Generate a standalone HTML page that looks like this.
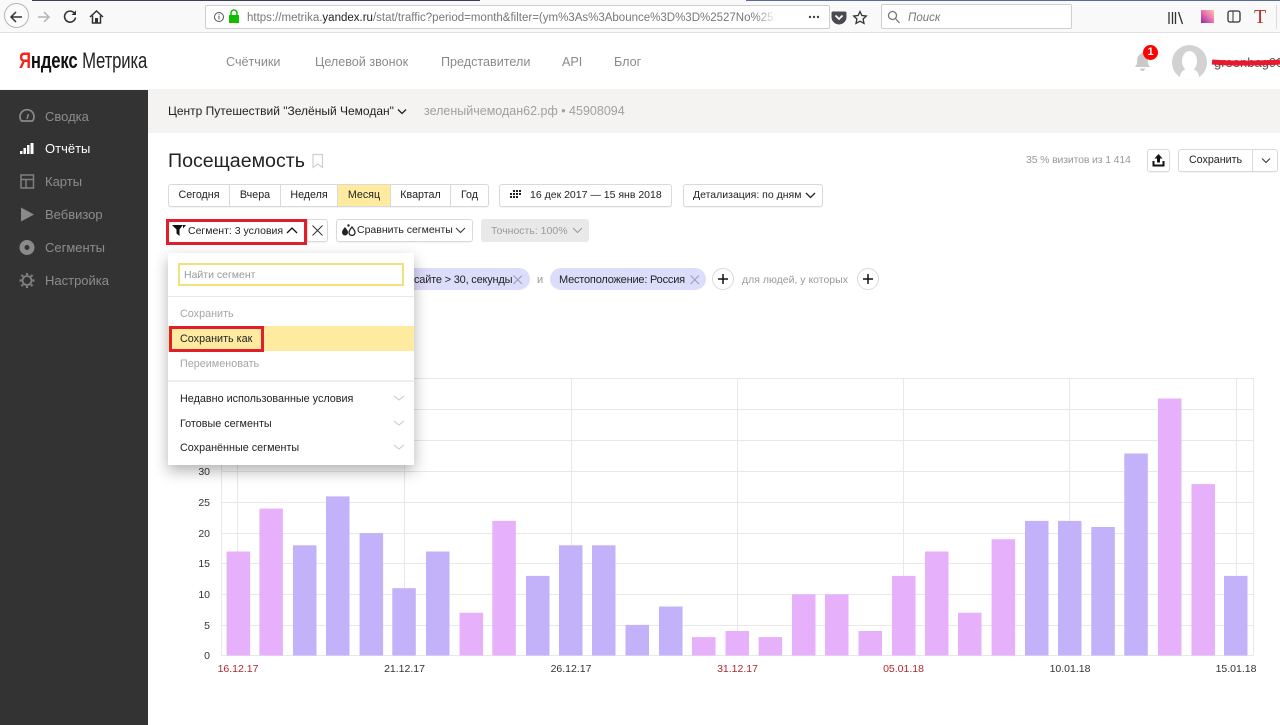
<!DOCTYPE html>
<html lang="ru"><head><meta charset="utf-8"><title>Посещаемость</title>
<style>
html,body{margin:0;padding:0;background:#fff}
body{width:1280px;height:725px;overflow:hidden;position:relative;font-family:"Liberation Sans",Arial,sans-serif;color:#222;font-size:12px}
.a,.t{position:absolute}
.t{white-space:nowrap;line-height:14px}
.btn{position:absolute;box-sizing:border-box;height:23px;background:#fff;border:1px solid #d9d9d9;border-radius:3px;line-height:21px;font-size:10.700px;white-space:nowrap;color:#222;box-shadow:0 1px 1px rgba(0,0,0,.05)}
.seg{position:absolute;top:0;bottom:0;box-sizing:border-box;text-align:center;border-right:1px solid #d9d9d9;line-height:21px}
.nav{font-size:12.600px;color:#8a8a8a}
.side{font-size:13px;color:#8d8d8d;left:45px}
.m{left:180px;font-size:10.800px;color:#222}
svg{position:absolute;overflow:visible}
</style></head><body>

<!-- browser toolbar -->
<div class="a" style="left:0;top:0;width:1280px;height:33px;background:#f9f9fa;border-bottom:1px solid #e0e0e1;box-sizing:border-box"></div>
<div class="a" style="left:32px;top:0;width:448px;height:1px;background:#3a4150"></div>
<div class="a" style="left:746px;top:0;width:534px;height:1px;background:#5a6b93"></div>
<div class="a" style="left:4px;top:3px;width:25px;height:25px;border:1px solid #b5b5b7;border-radius:50%;background:#fbfbfb;box-sizing:border-box"></div>
<svg style="left:0;top:0" width="120" height="33" fill="none">
<path d="M22 17H11M16 12l-5 5 5 5" stroke="#333" stroke-width="1.5"/>
<path d="M49 17H38M44 12l5 5-5 5" stroke="#b4b4b4" stroke-width="1.5"/>
<path d="M75.5 17.5a5.5 5.5 0 1 1-1.3-4.5" stroke="#333" stroke-width="1.6"/><path d="M76 10.5v4.5h-4.5z" fill="#333"/>
<path d="M90 17l6.5-6 6.500 6M92.500 15.500V23h8v-7.500" stroke="#333" stroke-width="1.5"/><rect x="95" y="18" width="3" height="5" fill="#333"/>
</svg>
<div class="a" style="left:168px;top:5px;width:0;height:0"></div>
<div class="a" style="left:205px;top:5px;width:625px;height:24px;box-sizing:border-box;border:1px solid #cfcfd1;border-radius:2px;background:#fff"></div>
<svg style="left:205px;top:5px" width="40" height="24" fill="none">
<circle cx="14" cy="12" r="4.500" stroke="#555" stroke-width="1"/><path d="M14 11v3.500M14 9.300v1" stroke="#555"/>
<rect x="24" y="10" width="10" height="8" fill="#12bc00"/><path d="M26 10V8a3 3 0 0 1 6 0v2" stroke="#12bc00" stroke-width="1.500"/>
</svg>
<div class="t" style="left:247px;top:11px;font-size:11.500px;color:#777;width:528px;overflow:hidden">https://metrika.<span style="color:#222">yandex.ru</span>/stat/traffic?period=month&amp;filter=(ym%3As%3Abounce%3D%3D%2527No%2527</div>
<div class="a" style="left:755px;top:8px;width:22px;height:18px;background:linear-gradient(90deg,rgba(255,255,255,0),#fff)"></div>
<svg style="left:800px;top:5px" width="75" height="24" fill="#444">
<circle cx="10" cy="12" r="1.200"/><circle cx="14" cy="12" r="1.200"/><circle cx="18" cy="12" r="1.200"/>
<path d="M33 6.500h12a1.500 1.500 0 0 1 1.500 1.500v4a7.500 7.500 0 0 1-15 0V8A1.500 1.500 0 0 1 33 6.500z" fill="#4a4a4f"/><path d="M35.500 10.500l3.500 3.500 3.500-3.500" fill="none" stroke="#fff" stroke-width="1.800"/>
<path d="M60 6.500l1.900 4 4.400.5-3.200 3 .9 4.400-4-2.200-4 2.200.9-4.400-3.200-3 4.400-.5z" fill="none" stroke="#333" stroke-width="1.300"/>
</svg>
<div class="a" style="left:881px;top:4px;width:191px;height:25px;box-sizing:border-box;border:1px solid #cfcfd1;border-radius:2px;background:#fff"></div>
<svg style="left:881px;top:5px" width="30" height="24" fill="none"><circle cx="11.500" cy="10.500" r="4" stroke="#777" stroke-width="1.300"/><path d="M14.500 13.500l4 4.500" stroke="#777" stroke-width="1.300"/></svg>
<div class="t" style="left:908px;top:11px;font-size:11.5px;font-style:italic;color:#777">Поиск</div>
<svg style="left:1170px;top:5px" width="110" height="24" fill="none">
<path d="M-1 7v12M2.500 7v12M5.500 7v12M8.500 7l4 12" stroke="#333" stroke-width="1.300"/>
<defs><linearGradient id="g" x1="1" y1="0" x2="0" y2="1"><stop offset="0" stop-color="#f9c8a8"/><stop offset=".5" stop-color="#e86fb0"/><stop offset="1" stop-color="#8b2fa8"/></linearGradient></defs>
<rect x="31" y="5" width="13" height="13" fill="url(#g)"/>
<rect x="58" y="6" width="12" height="11" rx="2" stroke="#333" stroke-width="1.300"/><path d="M63 6v11" stroke="#333"/>
</svg>
<div class="t" style="left:1254px;top:7px;font-family:'Liberation Serif',serif;font-size:20px;line-height:20px;color:#b5342a">T</div>
<div class="a" style="left:1276px;top:5px;width:1px;height:24px;background:#dcdcdc"></div>

<!-- site header -->
<div class="t" style="left:19px;top:48px;font-size:22px;line-height:26px;transform:scaleX(.76);transform-origin:0 0;letter-spacing:-.2px;width:190px"><span style="color:#f0261f;font-weight:bold">Я</span><span style="font-weight:bold;color:#111">ндекс</span> <span style="color:#222">Метрика</span></div>
<div class="t nav" style="left:226px;top:55px">Счётчики</div>
<div class="t nav" style="left:315px;top:55px">Целевой звонок</div>
<div class="t nav" style="left:441px;top:55px">Представители</div>
<div class="t nav" style="left:562px;top:55px">API</div>
<div class="t nav" style="left:614px;top:55px">Блог</div>
<svg style="left:1130px;top:45px" width="30" height="30" fill="#c9c9c9"><path d="M9 3a1.500 1.500 0 0 1 3 0c3.500 1 3.800 4 3.800 7 0 3.500 1.200 4.500 2.200 6H3c1-1.500 2.200-2.500 2.200-6 0-3 .3-6 3.800-7z" transform="translate(2 6)"/><path d="M10 23.500h5a2.500 2.500 0 0 1-5 0z"/></svg>
<div class="a" style="left:1143px;top:45px;width:15px;height:15px;border-radius:50%;background:#f00;color:#fff;font-size:11px;font-weight:bold;text-align:center;line-height:15px">1</div>
<div class="a" style="left:1172px;top:45px;width:35px;height:35px;border-radius:50%;background:#d2d2d2;overflow:hidden"><div class="a" style="left:10px;top:6px;width:15px;height:20px;border-radius:50%;background:#fff"></div><div class="a" style="left:8px;top:24px;width:19px;height:14px;border-radius:8px 8px 0 0;background:#fff"></div></div>
<div class="t" style="left:1214px;top:56px;font-size:13px;color:#555">greenbag90</div>
<svg style="left:1210px;top:55px" width="70" height="12"><path d="M2 7C20 8.500 50 8.500 70 7" stroke="#e8192c" stroke-width="5" fill="none"/></svg>

<!-- sidebar -->
<div class="a" style="left:0;top:89px;width:1280px;height:44px;background:#f4f3f1"></div>
<div class="a" style="left:0;top:90px;width:148px;height:635px;background:#333"></div>
<svg style="left:0;top:90px" width="148" height="210" fill="none">
<path d="M21.500 31.500a7 7 0 1 1 11 0z" stroke="#8a8a8a" stroke-width="1.700" transform="translate(0 -.5)"/><path d="M27 29l1.500-5" stroke="#8a8a8a" stroke-width="1.500"/>
<path d="M20 64h2.500v-3H20zM23.500 64h2.500v-6h-2.500zM27 64h2.500v-9H27zM30.500 64h3V53h-3z" fill="#fff"/>
<rect x="21" y="85" width="12.500" height="13" stroke="#808080" stroke-width="1.500"/><path d="M21 89.500h12.500M26 89.500V98" stroke="#808080" stroke-width="1.500"/>
<path d="M21 117.500l13 7-13 7z" fill="#8a8a8a"/>
<circle cx="27" cy="157.500" r="5" stroke="#8a8a8a" stroke-width="5"/>
<circle cx="27" cy="190.500" r="4.500" stroke="#808080" stroke-width="1.800"/><path d="M27 185v-2M27 198v-2M21.500 190.500h-2M34.500 190.500h-2M23 186.500l-1.500-1.500M32.500 196L31 194.500M23 194.500L21.500 196M32.500 185L31 186.500" stroke="#808080" stroke-width="2.200"/>
</svg>
<div class="t side" style="top:110px">Сводка</div>
<div class="t side" style="top:142px;color:#fff">Отчёты</div>
<div class="t side" style="top:175px">Карты</div>
<div class="t side" style="top:208px">Вебвизор</div>
<div class="t side" style="top:241px">Сегменты</div>
<div class="t side" style="top:274px">Настройка</div>

<!-- sub header -->
<div class="t" style="left:168px;top:104px;font-size:12px;color:#222">Центр Путешествий "Зелёный Чемодан"</div>
<svg style="left:396px;top:107px" width="12" height="10" fill="none"><path d="M2 2.500l4 4 4-4" stroke="#222" stroke-width="1.300"/></svg>
<div class="t" style="left:424px;top:104px;font-size:12.500px;color:#a0a0a0">зеленыйчемодан62.рф • 45908094</div>

<!-- title -->
<div class="t" style="left:168px;top:149px;font-size:19.600px;line-height:24px;color:#222">Посещаемость</div>
<svg style="left:311px;top:153px" width="14" height="16" fill="none"><path d="M2 1.500h9.500v13L6.750 11 2 14.500z" stroke="#d0d0d0" stroke-width="1.200"/></svg>
<div class="t" style="left:1026px;top:153px;font-size:10.500px;color:#999;letter-spacing:-.15px">35 % визитов из 1 414</div>
<div class="btn" style="left:1147px;top:149px;width:23px;height:23px"></div>
<svg style="left:1147px;top:149px" width="23" height="23" fill="#111"><path d="M11.500 5l4 4.500h-2.500v4h-3v-4H7.500z"/><path d="M5.500 12h2v3.500h8V12h2v5.500h-12z"/></svg>
<div class="btn" style="left:1178px;top:149px;width:100px;height:23px"><div class="seg" style="left:0;width:74px">Сохранить</div></div>
<svg style="left:1260px;top:156px" width="14" height="10" fill="none"><path d="M2 2.500l4 4 4-4" stroke="#333"/></svg>

<!-- row 1 -->
<div class="btn" style="left:168px;top:184px;width:321px">
<div class="seg" style="left:0;width:61px">Сегодня</div>
<div class="seg" style="left:61px;width:51px">Вчера</div>
<div class="seg" style="left:112px;width:57px">Неделя</div>
<div class="seg" style="left:169px;width:53px;background:#ffeba0">Месяц</div>
<div class="seg" style="left:222px;width:60px">Квартал</div>
<div class="seg" style="left:282px;width:37px;border:0">Год</div>
</div>
<div class="btn" style="left:499px;top:184px;width:173px;font-size:10.500px"><span class="a" style="left:30px;top:0">16 дек 2017 — 15 янв 2018</span></div>
<svg style="left:509px;top:189px" width="14" height="12" fill="#222"><path d="M4 1h2v2H4zM7 1h2v2H7zM10 1h2v2h-2zM1 4h2v2H1zM4 4h2v2H4zM7 4h2v2H7zM10 4h2v2h-2zM1 7h2v2H1zM4 7h2v2H4zM7 7h2v2H7z"/></svg>
<div class="btn" style="left:683px;top:184px;width:140px;font-size:10.500px"><span class="a" style="left:9px;top:0">Детализация: по дням</span></div>
<svg style="left:804px;top:191px" width="14" height="10" fill="none"><path d="M2 2l4.500 4.500L11 2" stroke="#222" stroke-width="1.300"/></svg>

<!-- row 2 -->
<div class="a" style="left:166px;top:219px;width:141px;height:26px;box-sizing:border-box;border:3px solid #e31e2b;background:#fff"></div>
<svg style="left:172px;top:224px" width="14" height="14" fill="#111"><path d="M0 1h11L7.500 5.500V12L4.500 9.500V5.500z"/><path d="M11 1h3L11 4.500z"/></svg>
<div class="t" style="left:188px;top:224px;font-size:10.500px">Сегмент: 3 условия</div>
<svg style="left:285px;top:226px" width="14" height="10" fill="none"><path d="M2 7l5-5 5 5" stroke="#111" stroke-width="1.300"/></svg>
<div class="btn" style="left:307px;top:219px;width:21px;border-radius:0 3px 3px 0"></div>
<svg style="left:311px;top:224px" width="13" height="13" fill="none"><path d="M1.500 1.500l10 10M11.500 1.500l-10 10" stroke="#333"/></svg>
<div class="btn" style="left:336px;top:219px;width:137px;font-size:10.500px"><span class="a" style="left:20px;top:0">Сравнить сегменты</span></div>
<svg style="left:341px;top:224px" width="16" height="13" fill="#222"><path d="M4 3c1.500 2 3 3.500 3 5.500a3 3 0 0 1-6 0C1 6.500 2.500 5 4 3z"/><path d="M11 3c1.500 2 3 3.500 3 5.500a3 3 0 0 1-6 0c0-2 1.500-3.500 3-5.500z" fill="none" stroke="#222" stroke-width="1.300"/><circle cx="7.500" cy="1.500" r="1.200"/></svg>
<svg style="left:454px;top:226px" width="14" height="10" fill="none"><path d="M2 2l4.500 4.500L11 2" stroke="#333"/></svg>
<div class="a" style="left:481px;top:219px;width:108px;height:23px;background:#e9e9e9;border-radius:3px"></div>
<div class="t" style="left:491px;top:224px;color:#999;font-size:10.500px">Точность: 100%</div>
<svg style="left:571px;top:226px" width="14" height="10" fill="none"><path d="M2 2l4.500 4.500L11 2" stroke="#999"/></svg>

<!-- chips -->
<div class="a" style="left:380px;top:268px;width:150px;height:22px;border-radius:11px;background:#dcdcfb"></div>
<div class="t" style="left:414px;top:273px;font-size:11px;color:#222;letter-spacing:-.2px">сайте &gt; 30, секунды</div>
<svg style="left:512px;top:274px" width="12" height="12" fill="none"><path d="M1.500 1.500l8.500 8.500M10 1.500L1.500 10" stroke="#9a9ab8"/></svg>
<div class="t" style="left:537px;top:273px;font-size:11px;color:#999">и</div>
<div class="a" style="left:550px;top:268px;width:156px;height:22px;border-radius:11px;background:#dcdcfb"></div>
<div class="t" style="left:559px;top:273px;font-size:11px;color:#222;letter-spacing:-.2px">Местоположение: Россия</div>
<svg style="left:689px;top:274px" width="12" height="12" fill="none"><path d="M1.500 1.500l8.500 8.500M10 1.500L1.500 10" stroke="#9a9ab8"/></svg>
<svg style="left:712px;top:268px" width="22" height="22" fill="none"><circle cx="11" cy="11" r="10.500" fill="#fff" stroke="#d9d9d9"/><path d="M6 11h10M11 6v10" stroke="#111" stroke-width="1.500"/></svg>
<div class="t" style="left:742px;top:273px;font-size:10.500px;color:#999">для людей, у которых</div>
<svg style="left:857px;top:268px" width="22" height="22" fill="none"><circle cx="11" cy="11" r="10.500" fill="#fff" stroke="#d9d9d9"/><path d="M6 11h10M11 6v10" stroke="#111" stroke-width="1.500"/></svg>

<!-- chart -->
<svg style="left:0;top:0" width="1280" height="725" font-family="Liberation Sans, Arial, sans-serif" font-size="10.500">
<g stroke="#e8e8e8" stroke-width="1">
<path d="M221 378.500H1253.500M221 409.500H1253M221 440.500H1253M221 471.500H1253M221 502.500H1253M221 533.500H1253M221 563.500H1253M221 594.500H1253M221 625.500H1253M221 655.500H1253"/>
<path d="M221.500 378V655.500M1253.500 378V655.500"/>
<path d="M237.500 378V655M404.500 378V655M571.500 378V655M737.500 378V655M903.500 378V655M1069.500 378V655M1236.500 378V655"/>
</g>
<g fill="#e6b0fb">
<rect x="226.600" y="551.500" width="23.500" height="104"/>
<rect x="259.400" y="508.600" width="23.500" height="146.900"/>
<rect x="459.600" y="612.700" width="23.500" height="42.800"/>
<rect x="492.300" y="520.900" width="23.500" height="134.600"/>
<rect x="692" y="637.100" width="23.500" height="18.400"/>
<rect x="725.500" y="631" width="23.500" height="24.500"/>
<rect x="758.600" y="637.100" width="23.500" height="18.400"/>
<rect x="792" y="594.300" width="23.500" height="61.200"/>
<rect x="825" y="594.300" width="23.500" height="61.200"/>
<rect x="858.500" y="631" width="23.500" height="24.500"/>
<rect x="892" y="575.900" width="23.500" height="79.600"/>
<rect x="925" y="551.500" width="23.500" height="104"/>
<rect x="958" y="612.700" width="23.500" height="42.800"/>
<rect x="991.600" y="539.200" width="23.500" height="116.300"/>
<rect x="1158" y="398.500" width="23.500" height="257"/>
<rect x="1191.500" y="484.100" width="23.500" height="171.400"/>
</g>
<g fill="#c3b1f9">
<rect x="293" y="545.300" width="23.500" height="110.200"/>
<rect x="326" y="496.400" width="23.500" height="159.100"/>
<rect x="359.600" y="533.100" width="23.500" height="122.400"/>
<rect x="392.300" y="588.200" width="23.500" height="67.300"/>
<rect x="426" y="551.500" width="23.500" height="104"/>
<rect x="526" y="575.900" width="23.500" height="79.600"/>
<rect x="559" y="545.300" width="23.500" height="110.200"/>
<rect x="592" y="545.300" width="23.500" height="110.200"/>
<rect x="625.500" y="624.900" width="23.500" height="30.600"/>
<rect x="659" y="606.500" width="23.500" height="49"/>
<rect x="1025" y="520.900" width="23.500" height="134.600"/>
<rect x="1058" y="520.900" width="23.500" height="134.600"/>
<rect x="1091.300" y="527" width="23.500" height="128.500"/>
<rect x="1124.300" y="453.500" width="23.500" height="202"/>
<rect x="1224" y="575.900" width="23.500" height="79.600"/>
</g>
<g fill="#333" text-anchor="end">
<text x="210" y="475">30</text><text x="210" y="506">25</text><text x="210" y="537">20</text><text x="210" y="567">15</text><text x="210" y="598">10</text><text x="210" y="629">5</text><text x="210" y="659">0</text>
</g>
<g text-anchor="middle" fill="#333">
<text x="238" y="672" fill="#b3262e">16.12.17</text><text x="404.500" y="672">21.12.17</text><text x="571" y="672">26.12.17</text><text x="737.500" y="672" fill="#b3262e">31.12.17</text><text x="903.500" y="672" fill="#b3262e">05.01.18</text><text x="1070" y="672">10.01.18</text><text x="1236" y="672">15.01.18</text>
</g>
</svg>

<!-- dropdown -->
<div class="a" style="left:168px;top:253px;width:246px;height:212px;background:#fff;box-shadow:0 6px 14px rgba(0,0,0,.3)">
<div class="a" style="left:10px;top:10px;width:226px;height:23px;box-sizing:border-box;border:2px solid #f5df7c"></div>
<div class="a" style="left:0;top:43px;width:246px;height:1px;background:#e8e8e8"></div>
<div class="a" style="left:0;top:73px;width:246px;height:25px;background:#ffeba0"></div>
<div class="a" style="left:0;top:127px;width:246px;height:2px;background:#eee"></div>
</div>
<div class="t" style="left:184px;top:268px;font-size:10.500px;color:#999">Найти сегмент</div>
<div class="t m" style="top:307px;color:#a5a5a5">Сохранить</div>
<div class="a" style="left:169px;top:326px;width:95px;height:26px;box-sizing:border-box;border:3px solid #e31e2b"></div>
<div class="t m" style="top:332px">Сохранить как</div>
<div class="t m" style="top:357px;color:#a5a5a5">Переименовать</div>
<div class="t m" style="top:392px">Недавно использованные условия</div>
<div class="t m" style="top:417px">Готовые сегменты</div>
<div class="t m" style="top:441px">Сохранённые сегменты</div>
<svg style="left:392px;top:394px" width="14" height="60" fill="none" stroke="#c8c8c8"><path d="M2 2l5 4 5-4M2 27l5 4 5-4M2 51l5 4 5-4"/></svg>
</body></html>
